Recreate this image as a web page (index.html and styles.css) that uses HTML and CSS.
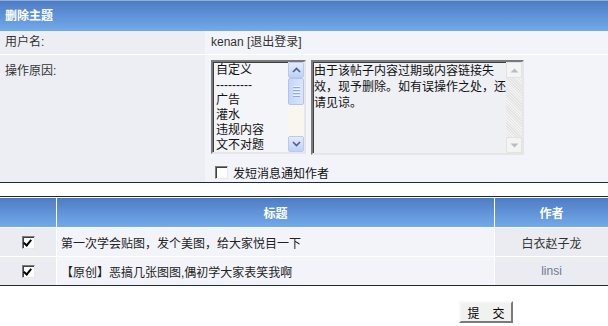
FILE: index.html
```html
<!DOCTYPE html>
<html>
    <head>
        <meta charset="UTF-8">
        <link rel="stylesheet" href="styles.css">
    </head>
    <body>
        <div class="del-box">
            <div class="box-head">删除主题</div>
            <div class="box-row row-user">
                <div class="label">用户名:</div>
                <div class="value">kenan <a class="logout" href="#">[退出登录]</a></div>
            </div>
            <div class="box-row row-reason">
                <div class="label">操作原因:</div>
                <div class="value">
                    <div class="reason-inputs">
                        <div class="reason-select">
                            <div class="options">
                                <div>自定义</div>
                                <div>---------</div>
                                <div>广告</div>
                                <div>灌水</div>
                                <div>违规内容</div>
                                <div>文不对题</div>
                            </div>
                            <div class="xp-scroll">
                                <div class="xp-btn">
                                    <svg width="9" height="6" viewBox="0 0 9 6"><path d="M1 5 L4.5 1.5 L8 5" fill="none" stroke="#4d6185" stroke-width="1.6"/></svg>
                                </div>
                                <div class="xp-thumb"><span></span><span></span><span></span><span></span></div>
                                <div class="xp-track"></div>
                                <div class="xp-btn">
                                    <svg width="9" height="6" viewBox="0 0 9 6"><path d="M1 1 L4.5 4.5 L8 1" fill="none" stroke="#4d6185" stroke-width="1.6"/></svg>
                                </div>
                            </div>
                        </div>
                        <div class="reason-text">
                            <div class="text">由于该帖子内容过期或内容链接失效，现予删除。如有误操作之处，还请见谅。</div>
                            <div class="gray-scroll">
                                <div class="gray-btn">
                                    <svg width="9" height="5" viewBox="0 0 9 5"><path d="M0.5 4.5 L4.5 0.5 L8.5 4.5 Z" fill="#b8bcc4"/></svg>
                                </div>
                                <div class="gray-track"></div>
                                <div class="gray-btn">
                                    <svg width="9" height="5" viewBox="0 0 9 5"><path d="M0.5 0.5 L4.5 4.5 L8.5 0.5 Z" fill="#b8bcc4"/></svg>
                                </div>
                            </div>
                        </div>
                    </div>
                    <label class="notify"><span class="box-check"></span>发短消息通知作者</label>
                </div>
            </div>
        </div>

        <table class="topic-table">
            <tr class="head">
                <th class="col-check"></th>
                <th class="col-title">标题</th>
                <th class="col-author">作者</th>
            </tr>
            <tr>
                <td class="col-check"><span class="box-check checked"></span></td>
                <td class="col-title">第一次学会贴图，发个美图，给大家悦目一下</td>
                <td class="col-author">白衣赵子龙</td>
            </tr>
            <tr>
                <td class="col-check"><span class="box-check checked"></span></td>
                <td class="col-title">【原创】恶搞几张图图,偶初学大家表笑我啊</td>
                <td class="col-author author-light">linsi</td>
            </tr>
        </table>

        <div class="submit-line">
            <button class="submit-btn"><span class="btn-gap">提</span>交</button>
        </div>
    </body>
</html>
```

FILE: styles.css
```css
body {
    margin: 0;
    background: #fff;
    font-family: Tahoma, "Liberation Sans", "Noto Sans CJK SC", sans-serif;
    font-size: 12px;
    color: #333;
}
.del-box {
    width: 608px;
    border-top: 1px solid #8eaedb;
    border-bottom: 1px solid #1c2b44;
}
.box-head {
    height: 30px;
    line-height: 30px;
    padding-left: 5px;
    color: #fff;
    font-weight: bold;
    background: linear-gradient(#4e7cc4, #72aaea);
}
.box-row {
    display: grid;
    grid-template-columns: 205px 1fr;
    border-bottom: 1px solid #fff;
}
.box-row:last-child {
    border-bottom: none;
}
.label {
    background: #eceef3;
    padding-left: 5px;
}
.value {
    background: #f2f4f9;
    padding-left: 6px;
}
.row-user {
    height: 23px;
    line-height: 23px;
}
.row-user .logout {
    color: #333;
    text-decoration: none;
}
.row-reason {
    height: 127px;
}
.row-reason .label {
    padding-top: 6px;
}
.row-reason .value {
    padding-top: 5px;
}
.reason-inputs {
    display: flex;
    gap: 5px;
}
.reason-select {
    display: flex;
    width: 95px;
    height: 94px;
    box-sizing: border-box;
    border: 2px solid;
    border-color: #7a7a7a #e6e6e6 #e6e6e6 #7a7a7a;
    box-shadow: inset 1px 1px 0 #3c3c3c;
    background: #f3f5f8;
}
.options {
    flex: 1;
    padding: 1px 0 0 3px;
    line-height: 15px;
    color: #111;
    overflow: hidden;
}
.xp-scroll {
    width: 16px;
    display: flex;
    flex-direction: column;
    background: #f8f6ee;
}
.xp-btn {
    height: 16px;
    box-sizing: border-box;
    border: 1px solid #b7c9ef;
    border-radius: 2px;
    background: linear-gradient(#e3ebfc, #bfd1f8);
    display: flex;
    align-items: center;
    justify-content: center;
}
.xp-thumb {
    height: 27px;
    box-sizing: border-box;
    border: 1px solid #b2c4ee;
    border-radius: 2px;
    background: linear-gradient(90deg, #c5d6fb, #dbe5fd);
    display: flex;
    flex-direction: column;
    align-items: center;
    justify-content: center;
    gap: 1px;
}
.xp-thumb span {
    width: 7px;
    height: 1px;
    background: #eef3fe;
    border-bottom: 1px solid #8faae0;
}
.xp-track {
    flex: 1;
}
.reason-text {
    display: flex;
    width: 213px;
    height: 95px;
    box-sizing: border-box;
    border: 2px solid;
    border-color: #7a7a7a #e6e6e6 #e6e6e6 #7a7a7a;
    box-shadow: inset 1px 1px 0 #404040;
    background: #eef0f4;
}
.reason-text .text {
    flex: 1;
    padding: 1px 0 0 1px;
    line-height: 16px;
    color: #111;
    overflow: hidden;
}
.gray-scroll {
    width: 16px;
    display: flex;
    flex-direction: column;
    background: repeating-linear-gradient(45deg, #f2f2f2 0 1px, #e4e4e4 1px 2px);
}
.gray-btn {
    height: 16px;
    box-sizing: border-box;
    border: 1px solid #e2e2e2;
    border-radius: 2px;
    background: #f4f4f4;
    display: flex;
    align-items: center;
    justify-content: center;
}
.gray-track {
    flex: 1;
}
.notify {
    display: flex;
    align-items: center;
    margin-top: 9px;
    padding-left: 4px;
    color: #111;
}
.box-check {
    display: inline-block;
    width: 13px;
    height: 13px;
    box-sizing: border-box;
    border: 1px solid;
    border-color: #7a7a7a #e8e8e8 #e8e8e8 #7a7a7a;
    box-shadow: inset 1px 1px 0 #404040;
    background: #fdfdfb;
    margin-right: 5px;
    position: relative;
}
.box-check.checked {
    margin-right: 0;
    vertical-align: middle;
}
.box-check.checked::after {
    content: "";
    position: absolute;
    left: 2px;
    top: 1px;
    width: 3px;
    height: 6px;
    border: solid #000;
    border-width: 0 2px 2px 0;
    transform: rotate(40deg);
}
.topic-table {
    width: 608px;
    margin-top: 13px;
    border-collapse: separate;
    border-spacing: 0;
    border-top: 1px solid #1c2b44;
    border-bottom: 1px solid #1c2b44;
}
.topic-table th,
.topic-table td {
    padding: 0;
    border-right: 1px solid #fff;
    border-bottom: 1px solid #fff;
}
.topic-table th:last-child,
.topic-table td:last-child {
    border-right: none;
}
.topic-table tr:last-child td {
    border-bottom: none;
}
.topic-table th {
    height: 29px;
    border-top: 1px solid #fff;
    color: #fff;
    font-weight: bold;
    background: linear-gradient(#4e7cc4, #72aaea);
}
.topic-table td {
    height: 28px;
}
.col-check {
    width: 56px;
    text-align: center;
    background: #eaecf1;
}
.col-title {
    text-align: left;
    padding-left: 4px !important;
    background: #f2f4f9;
    color: #222;
}
th.col-title {
    text-align: center;
    padding-left: 0 !important;
    background: linear-gradient(#4e7cc4, #72aaea);
}
.col-author {
    width: 113px;
    text-align: center;
    background: #eaecf1;
}
.author-light {
    color: #6e7b90;
}
.submit-line {
    padding: 15px 0 0 459px;
}
.submit-btn {
    width: 54px;
    height: 22px;
    padding: 0;
    font-family: "Noto Sans CJK SC", sans-serif;
    font-size: 12px;
    color: #000;
    background: #f1f1ef;
    border: 2px solid;
    border-color: #f8f8f8 #7a7a7a #7a7a7a #f8f8f8;
}
.btn-gap {
    margin-right: 13px;
}
```
